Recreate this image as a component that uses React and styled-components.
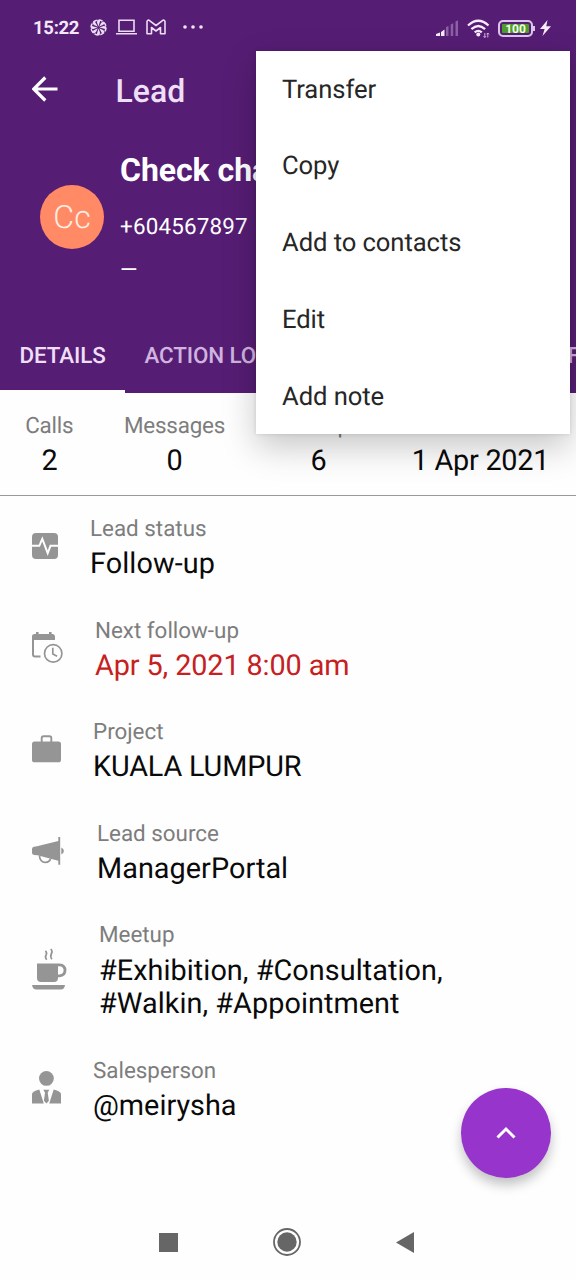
import React from "react";
import styled, { createGlobalStyle } from "styled-components";

const menuItems = ["Transfer", "Copy", "Add to contacts", "Edit", "Add note"];

const tabs = [
    { label: "DETAILS", width: 125, active: true },
    { label: "ACTION LOG", width: 165 },
    { label: "MEETUPS", width: 137 },
    { label: "NOTES", width: 121 },
    { label: "FILES", width: 110 },
];

const stats = [
    { label: "Calls", value: "2" },
    { label: "Messages", value: "0" },
    { label: "Meetups", value: "6" },
    { label: "Created", value: "1 Apr 2021" },
];

const StatusIcon = () => (
    <svg width="26" height="26" viewBox="0 0 26 26">
        <rect width="26" height="26" rx="4" fill="#959595" />
        <path
            d="M0 12.8h7.3l3-7 5.4 14.4 2.8-7.4H26"
            fill="none"
            stroke="#fff"
            strokeWidth="1.9"
        />
    </svg>
);

const CalendarIcon = () => (
    <svg width="31" height="31" viewBox="0 0 31 31">
        <path d="M0 8V4.5Q0 2 2.5 2H4V0h2.6v2H17V0h2.6v2h1.2Q23 2 23 4.5V8z" fill="#959595" />
        <path d="M1 7v15.5q0 2 2 2h5.5" fill="none" stroke="#959595" strokeWidth="2" />
        <circle cx="21.2" cy="21.4" r="8.7" fill="#fff" stroke="#959595" strokeWidth="1.7" />
        <path d="M20.8 15.8v6.3l4.3 2.2" fill="none" stroke="#959595" strokeWidth="1.7" />
    </svg>
);

const BriefcaseIcon = () => (
    <svg width="29" height="28" viewBox="0 0 29 28">
        <rect y="6.5" width="29" height="20.8" rx="2.6" fill="#959595" />
        <path d="M9.7 7V3q0-1.8 1.8-1.8h6q1.8 0 1.8 1.8v4" fill="none" stroke="#959595" strokeWidth="1.9" />
    </svg>
);

const MegaphoneIcon = () => (
    <svg width="33" height="28" viewBox="0 0 33 28">
        <path d="M0 12q0-2 2-2.3L5 9.3 26.3 4V0h1.9v27.8h-1.9v-4L5.5 18.2 2 18q-2-.3-2-2z" fill="#959595" />
        <path d="M7.4 18.5q.6 7 6 6.900 4.300-.2 5.200-3.900" fill="none" stroke="#959595" strokeWidth="1.7" />
        <path d="M29.3 10.4q2.600 1 2.600 3.500t-2.600 3.500z" fill="#959595" />
    </svg>
);

const CoffeeIcon = () => (
    <svg width="35" height="42" viewBox="0 0 35 42">
        <path
            d="M13.4 2.8q2 1.8.6 4.400-1.300 2.200.7 4.500M18.800 1q2.200 2.300.5 5-1.300 2.500.6 5.200"
            fill="none"
            stroke="#959595"
            strokeWidth="1.7"
        />
        <path d="M5 15.5h21V30q0 4-4 4H9q-4 0-4-4z" fill="#959595" />
        <path d="M26 16.8h1.500q5.500.3 5.500 5.500t-5.500 5.500H26" fill="none" stroke="#959595" strokeWidth="2.8" />
        <path d="M0 37h33q-.7 4.5-4.2 4.5H4.5Q.8 41.5 0 37z" fill="#959595" />
    </svg>
);

const PersonIcon = () => (
    <svg width="29" height="33" viewBox="0 0 29 33">
        <circle cx="14.4" cy="7.4" r="7.4" fill="#959595" />
        <path
            d="M0 32.5V23q.2-2.6 7.3-4.5l4.5 14zM29 32.5V23q-.2-2.6-7.3-4.5l-4.5 14zM11.3 18.7h6l-1.6 3 1.2 8-2.4 2.8-2.6-2.8 1.1-8z"
            fill="#959595"
        />
    </svg>
);

const fields = [
    { label: "Lead status", lines: ["Follow-up"], Icon: StatusIcon, tracking: 0.1 },
    { label: "Next follow-up", lines: ["Apr 5, 2021 8:00 am"], Icon: CalendarIcon, tracking: -0.1, overdue: true },
    { label: "Project", lines: ["KUALA LUMPUR"], Icon: BriefcaseIcon, tracking: -0.15 },
    { label: "Lead source", lines: ["ManagerPortal"], Icon: MegaphoneIcon, tracking: 0.05 },
    {
        label: "Meetup",
        lines: ["#Exhibition, #Consultation,", "#Walkin, #Appointment"],
        Icon: CoffeeIcon,
        tracking: 0.06,
    },
    { label: "Salesperson", lines: ["@meirysha"], Icon: PersonIcon },
];

const blades = [0, 45, 90, 135, 180, 225, 270, 315];

const NotificationIcons = () => (
    <Notifications>
        <svg width="17" height="17" viewBox="0 0 17 17">
            <circle
                cx="8.5"
                cy="8.5"
                r="7.5"
                fill="none"
                stroke="#eadcf2"
                strokeWidth="1.5"
                strokeDasharray="4 1.89"
            />
            {blades.map((angle) => (
                <path
                    key={angle}
                    d="M8.5 7.6L7 3.500 7.300.8l3 .2-.7 2.700z"
                    fill="#eadcf2"
                    transform={`rotate(${angle} 8.5 8.5)`}
                />
            ))}
        </svg>
        <svg width="21" height="16" viewBox="0 0 21 16">
            <path d="M3 1.2h15v11H3zM0 14.7h21" fill="none" stroke="#eadcf2" strokeWidth="1.6" />
        </svg>
        <svg width="20" height="16" viewBox="0 0 20 16">
            <path
                d="M1 14.8V2.6Q1.3.7 3.2 1.3L10 6.5l6.8-5.2q1.9-.6 2.2 1.3v12.2h-4.500V8.5L10 12 5.5 8.5v6.3z"
                fill="none"
                stroke="#eadcf2"
                strokeWidth="1.6"
                strokeLinejoin="round"
            />
        </svg>
        <Overflow width="20" height="4" viewBox="0 0 20 4">
            <circle cx="2" cy="2" r="1.8" />
            <circle cx="10" cy="2" r="1.8" />
            <circle cx="18" cy="2" r="1.8" />
        </Overflow>
    </Notifications>
);

const SystemIcons = () => (
    <System>
        <svg width="23" height="17" viewBox="0 0 23 17">
            <path d="M0 14L4 12.500V16H0zM5 12l3.500-2.500V16H5z" fill="#f6ebfb" />
            <path d="M10 7l2.500-1v10H10zM14.700 4.500l2.500-1.300V16h-2.500zM19.500 1.500L22 .3V16h-2.500z" fill="#8c60a5" />
        </svg>
        <svg width="23" height="19" viewBox="0 0 23 19">
            <path
                d="M1 6.500q10.200-9.500 20.500 0M4.400 10.100q6.900-6.300 13.700 0M7.700 13.400q3.600-3.100 7.100 0"
                fill="none"
                stroke="#f6ebfb"
                strokeWidth="2.3"
            />
            <circle cx="11.3" cy="15.6" r="2" fill="#f6ebfb" />
            <path
                d="M17.800 14v4.500m-1.300-1.300l1.300 1.300 1.200-1.300M20.800 18.500V14m-1.300 1.300l1.300-1.300 1.200 1.300"
                fill="none"
                stroke="#d8c2e5"
                strokeWidth=".9"
            />
        </svg>
        <Battery>100</Battery>
        <svg width="11" height="16" viewBox="0 0 11 16">
            <path d="M7.500 0L0 9h4.600L2.500 16 11 6.300H6.300z" fill="#f6ebfb" />
        </svg>
    </System>
);

export default function App() {
    return (
        <Screen>
            <GlobalStyle />
            <Header>
                <StatusBar>
                    <Clock>15:22</Clock>
                    <NotificationIcons />
                    <SystemIcons />
                </StatusBar>
                <AppBar>
                    <svg width="26" height="26" viewBox="0 0 26 26">
                        <path
                            d="M25.500 13H2M13.300 1.500L1.700 13l11.600 11.500"
                            fill="none"
                            stroke="#fff"
                            strokeWidth="3.2"
                        />
                    </svg>
                    <Title>Lead</Title>
                </AppBar>
                <Profile>
                    <Avatar>Cc</Avatar>
                    <Contact>
                        <Name>Check change</Name>
                        <Phone>+604567897</Phone>
                        <Phone>—</Phone>
                    </Contact>
                </Profile>
                <Tabs>
                    {tabs.map((tab) => (
                        <Tab key={tab.label} $width={tab.width} $active={tab.active}>
                            {tab.label}
                        </Tab>
                    ))}
                </Tabs>
            </Header>
            <Stats>
                {stats.map((stat) => (
                    <Stat key={stat.label}>
                        <Label>{stat.label}</Label>
                        <Value $tracking={-0.25}>{stat.value}</Value>
                    </Stat>
                ))}
            </Stats>
            <Fields>
                {fields.map(({ label, lines, Icon, overdue, tracking }) => (
                    <Field key={label}>
                        <Icon />
                        <div>
                            <Label>{label}</Label>
                            {lines.map((line) => (
                                <Value key={line} $overdue={overdue} $tracking={tracking}>
                                    {line}
                                </Value>
                            ))}
                        </div>
                    </Field>
                ))}
            </Fields>
            <NavBar>
                <svg width="19" height="19">
                    <rect width="19" height="19" fill="#666" />
                </svg>
                <svg width="28" height="28" viewBox="0 0 28 28">
                    <circle cx="14" cy="14" r="13" fill="none" stroke="#666" strokeWidth="1.8" />
                    <circle cx="14" cy="14" r="9.7" fill="#666" />
                </svg>
                <svg width="18" height="21" viewBox="0 0 18 21">
                    <path d="M18 0v21L0 10.5z" fill="#666" />
                </svg>
            </NavBar>
            <Menu>
                {menuItems.map((item) => (
                    <MenuItem key={item}>{item}</MenuItem>
                ))}
            </Menu>
            <Fab>
                <svg width="20" height="14" viewBox="0 0 20 14">
                    <path d="M1.500 11.500L10 3l8.500 8.500" fill="none" stroke="#fff" strokeWidth="3" />
                </svg>
            </Fab>
        </Screen>
    );
}

const GlobalStyle = createGlobalStyle`
    body {
        margin: 0;
        background: #fefefe;
    }

    * {
        box-sizing: border-box;
    }

    svg {
        display: block;
        flex: none;
    }
`;

const Screen = styled.main`
    position: relative;
    width: 576px;
    height: 1280px;
    overflow: hidden;
    display: flex;
    flex-direction: column;
    background: #fefefe;
    font-family: Roboto, sans-serif;
    text-rendering: geometricPrecision;
`;

const Header = styled.header`
    height: 393px;
    flex: none;
    display: flex;
    flex-direction: column;
    background: #561d74;
    color: #fff;
`;

const StatusBar = styled.div`
    height: 54px;
    display: flex;
    align-items: center;
    padding: 0 25px 0 33px;
`;

const Clock = styled.span`
    width: 57px;
    padding-top: 1px;
    font-size: 18.5px;
    font-weight: 700;
    letter-spacing: -0.3px;
    color: #f3e8f9;
`;

const Notifications = styled.div`
    display: flex;
    align-items: center;
    gap: 9px;
`;

const Overflow = styled.svg`
    margin-left: 8px;
    fill: #f3e8f9;
`;

const System = styled.div`
    margin-left: auto;
    display: flex;
    align-items: center;
    gap: 8px;

    svg:first-child,
    svg:nth-child(2) {
        margin-top: 2px;
    }

    svg:last-child {
        margin-top: 2px;
        margin-left: -1px;
    }
`;

const Battery = styled.div`
    position: relative;
    width: 35px;
    height: 17px;
    margin-top: 2px;
    border: 2px solid #dcc5eb;
    border-radius: 5px;
    background: #4f9c2c;
    box-shadow: inset 0 0 0 2px #561d74;
    color: #f3ffe9;
    font-size: 12px;
    font-weight: 700;
    line-height: 14px;
    text-align: center;

    &::after {
        content: "";
        position: absolute;
        top: 4px;
        right: -4px;
        width: 2px;
        height: 5px;
        background: #dcc5eb;
    }
`;

const AppBar = styled.div`
    height: 72px;
    display: flex;
    align-items: center;
    padding: 0 0 2px 32px;
`;

const Title = styled.h1`
    margin: 4px 0 0 57.5px;
    font-size: 32px;
    font-weight: 500;
    color: #eedff6;
`;

const Profile = styled.div`
    height: 190px;
    display: flex;
    align-items: flex-start;
    padding: 24px 0 0 40px;
`;

const Avatar = styled.div`
    width: 64px;
    height: 64px;
    margin-top: 35px;
    border-radius: 50%;
    background: #ff8a65;
    color: #ffeee4;
    font-size: 32px;
    font-weight: 300;
    line-height: 65px;
    text-align: center;
`;

const Contact = styled.div`
    margin-left: 16px;
    white-space: nowrap;
`;

const Name = styled.div`
    margin-bottom: 16px;
    font-size: 32px;
    font-weight: 700;
    letter-spacing: -0.05px;
    line-height: 40px;
`;

const Phone = styled.div`
    font-size: 22.4px;
    letter-spacing: 0.18px;
    line-height: 43px;
`;

const Tabs = styled.nav`
    height: 77px;
    display: flex;
`;

const Tab = styled.div`
    flex: none;
    width: ${(props) => props.$width}px;
    padding: 0 19.5px;
    border-bottom: 3px solid ${(props) => (props.$active ? "#fefefe" : "transparent")};
    color: ${(props) => (props.$active ? "#eedff6" : "#ceb4de")};
    font-size: 22.4px;
    font-weight: 500;
    letter-spacing: -0.12px;
    line-height: 80px;
    white-space: nowrap;
`;

const Stats = styled.section`
    height: 103px;
    flex: none;
    display: flex;
    padding-top: 18px;
    border-bottom: 1.6px solid #999;
    letter-spacing: -0.18px;
    white-space: nowrap;
`;

const Stat = styled.div`
    flex: none;
    padding: 0 25.2px;
    text-align: center;
`;

const Label = styled.div`
    margin-bottom: 4.2px;
    color: #7d7d7d;
    font-size: 22.4px;
    line-height: 30px;
`;

const Value = styled.div`
    color: ${(props) => (props.$overdue ? "#c62020" : "#0a0a0a")};
    font-size: 28.8px;
    letter-spacing: ${(props) => props.$tracking || 0}px;
    line-height: 33.75px;
    white-space: nowrap;
`;

const Fields = styled.section`
    flex: 1;
    display: flex;
    flex-direction: column;
    gap: 33.6px;
    padding: 18.2px 0 0 32px;
`;

const Field = styled.div`
    display: flex;
    align-items: center;
    gap: 32px;

    > svg {
        margin-top: -4px;
    }
`;

const NavBar = styled.footer`
    height: 76px;
    flex: none;
    display: flex;
    align-items: center;
    justify-content: space-between;
    padding: 0 162px 0 159px;
`;

const Menu = styled.div`
    position: absolute;
    top: 50.5px;
    left: 256px;
    width: 313.5px;
    height: 383.5px;
    background: #fff;
    box-shadow: 0 13px 32px rgba(0, 0, 0, 0.22), 0 0 4px rgba(0, 0, 0, 0.12);
`;

const MenuItem = styled.div`
    height: 76.8px;
    padding-left: 26px;
    color: #262626;
    font-size: 25.6px;
    letter-spacing: -0.07px;
    line-height: 79.5px;
`;

const Fab = styled.div`
    position: absolute;
    top: 1088px;
    left: 461px;
    width: 89.6px;
    height: 89.6px;
    display: flex;
    align-items: center;
    justify-content: center;
    border-radius: 50%;
    background: #9634cc;
    box-shadow: 0 7px 12px rgba(0, 0, 0, 0.24);
`;
